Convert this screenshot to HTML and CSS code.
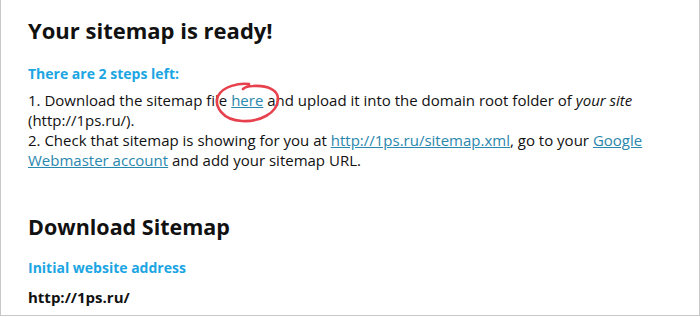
FILE: index.html
```html
<!DOCTYPE html>
<html lang="en">
<head>
    <meta charset="UTF-8">
    <title>Sitemap</title>
    <link rel="stylesheet" href="styles.css">
</head>
<body>
    <div class="frame">
        <h1 class="title">Your sitemap is ready!</h1>
        <div class="label">There are 2 steps left:</div>

        <div class="steps">
            <p>1. Download the sitemap file <span class="mark"><a href="#">here</a><svg class="scribble" width="70" height="44" viewBox="0 0 70 44">
                    <!-- hand-drawn circle around the link -->
                    <path d="M35 2 C25 1 9 4 4 14 C0 24 8 38 28 39 C46 40 63 31 64 18 C65 8 53 3 39 4 C34 4 31 5 29 7" fill="none" stroke="#e6414d" stroke-width="2.6" stroke-linecap="round"/>
                </svg></span> and upload it into the domain root folder of <em>your site</em> (http://1ps.ru/).</p>
            <p>2. Check that sitemap is showing for you at <a href="#">http://1ps.ru/sitemap.xml</a>, go to your <a href="#">Google Webmaster account</a> and add your sitemap URL.</p>
        </div>

        <h2 class="title small">Download Sitemap</h2>
        <div class="label">Initial website address</div>
        <div class="value">http://1ps.ru/</div>
    </div>
</body>
</html>
```

FILE: styles.css
```css
body {
    margin: 0;
    background-color: white;
    font-family: "Open Sans", sans-serif;
    color: #111;
}
.frame {
    height: 315px;
    border: 1px solid #c8c8c8;
    border-top: none;
    padding: 0 50px 0 27px;
    overflow: hidden;
}
.title {
    font-size: 22px;
    font-weight: bold;
    margin: 15px 0 19px;
}
.title.small {
    font-size: 21.5px;
    margin: 42px 0 17px;
}
.label {
    color: #1ba5e2;
    font-weight: bold;
    font-size: 14px;
    margin-bottom: 7px;
}
.steps p {
    margin: 0;
    font-size: 15px;
    line-height: 20px;
}
.steps a {
    color: #2a87ad;
}
.mark {
    position: relative;
}
.scribble {
    position: absolute;
    left: -17px;
    top: -8px;
}
.value {
    font-weight: bold;
    font-size: 15px;
    margin-top: 10px;
}
```
